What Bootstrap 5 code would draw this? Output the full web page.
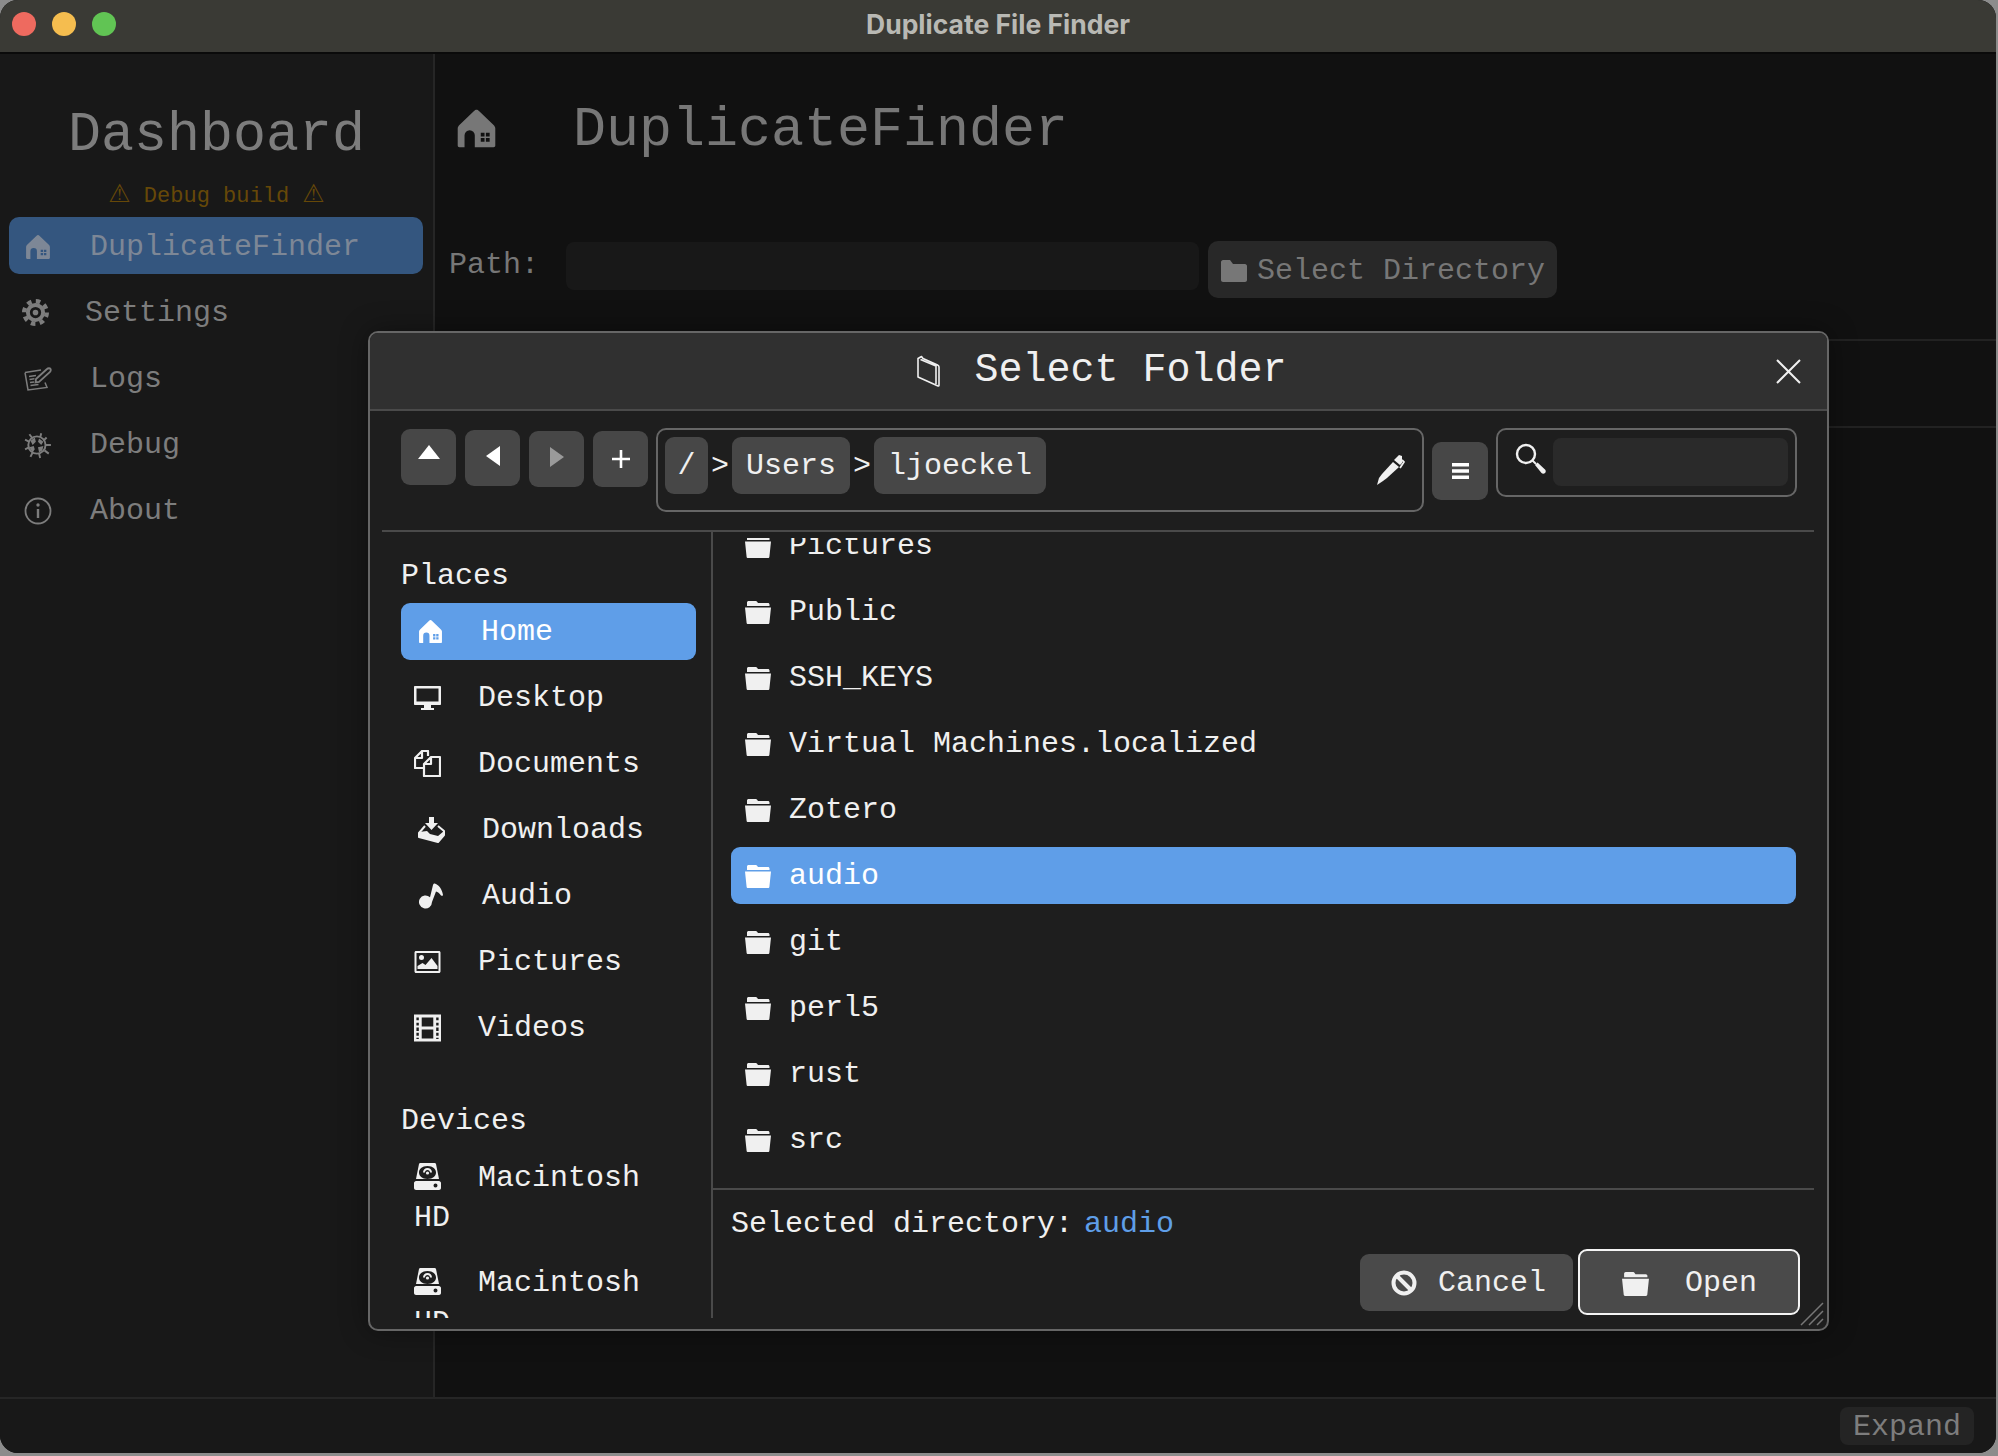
<!DOCTYPE html>
<html lang="en">
<head>
    <meta charset="UTF-8">
    <meta name="viewport" content="width=device-width, initial-scale=1.0">
    <title>Duplicate File Finder</title>
    <link href="https://cdn.jsdelivr.net/npm/bootstrap@5.3.0/dist/css/bootstrap.min.css" rel="stylesheet">
    <style>
        html, body { height: 100%; overflow: hidden; }
        body {
            background: #8c8c8c;
            font-family: "Liberation Mono", "DejaVu Sans Mono", monospace;
            font-size: 30px;
            line-height: 36px;
            color: #f0f0f0;
        }
        svg { flex: none; display: block; }

        .app-window {
            width: 1996px;
            height: 1453px;
            border-radius: 18px;
            overflow: hidden;
            background: #111;
        }

        /* title bar */
        .title-bar {
            height: 54px;
            display: grid;
            grid-template-columns: 1fr auto 1fr;
            align-items: center;
            background: #3a3a35;
            border-bottom: 2px solid #0a0a0a;
            padding: 0 0 4px 12px;
        }
        .light { width: 24px; height: 24px; border-radius: 50%; }
        .title-text {
            font-family: Inter, "Noto Sans", sans-serif;
            font-size: 26.500px;
            font-weight: 700;
            color: #b9b9b4;
            margin-right: 12px;
        }

        /* side panel */
        .side-panel {
            width: 435px;
            background: #181818;
            border-right: 2px solid #262626;
            color: #7d7d7d;
        }
        .side-title { font-size: 55px; line-height: 66px; padding-top: 49px; text-align: center; }
        .debug-note {
            font-size: 22px;
            line-height: 30px;
            margin-top: 13px;
            margin-bottom: 5px;
            color: #664808;
            text-align: center;
        }
        .warn-glyph { font-family: "DejaVu Sans", sans-serif; font-size: 25px; line-height: 0; }
        .side-link {
            height: 57px;
            margin: 0 9px 9px;
            padding: 2px 0 0 15px;
            width: 414px;
            border-radius: 10px;
            color: #7d7d7d;
            gap: 38px;
        }
        .side-link.active { background: #34567f; color: #7d8796; }
        .side-link.tight { padding-left: 13px; gap: 36px; }

        /* main panel */
        .main-panel { padding: 44px 0 0 14px; color: #777; }
        .main-heading { font-size: 55px; line-height: 66px; gap: 76px; padding-left: 7px; }
        .heading-house { margin-top: -6px; }
        .path-row { margin-top: 77px; }
        .path-label { width: 117px; margin-top: 6px; }
        .path-input {
            width: 633px;
            height: 48px;
            margin: 1px 9px 0 0;
            background: #181818;
            border: 0;
            border-radius: 8px;
        }
        .pick-btn {
            --bs-btn-bg: #282828;
            --bs-btn-color: #777;
            width: 349px;
            height: 57px;
            padding: 2px 0 0 13px;
            border: 0;
            border-radius: 10px;
            font: inherit;
            gap: 10px;
        }
        .main-rule { border-top: 2px solid #222; }
        .rule-one { margin-top: 41px; }
        .rule-two { margin-top: 85px; }

        /* bottom bar */
        .bottom-bar {
            height: 56px;
            background: #181818;
            border-top: 2px solid #262626;
            padding: 8px 22px 0 0;
        }
        .expand-btn {
            --bs-btn-bg: #242424;
            --bs-btn-color: #7d7d7d;
            width: 134px;
            height: 38px;
            padding: 1px 0 0;
            border: 0;
            border-radius: 8px;
            font: inherit;
            line-height: 38px;
        }

        /* folder dialog, floats over the page */
        .folder-dialog {
            position: absolute;
            left: 368px;
            top: 331px;
            width: 1461px;
            height: 1000px;
            background: #1e1e1e;
            border: 2px solid #666;
            border-radius: 10px;
            box-shadow: 0 0 28px rgba(0, 0, 0, .4);
            overflow: hidden;
        }
        .dialog-head {
            height: 78px;
            display: grid;
            grid-template-columns: 1fr auto 1fr;
            align-items: center;
            background: #303030;
            border-bottom: 2px solid #4a4a4a;
            padding: 0 26px 0 32px;
        }
        .dialog-title { font-size: 40px; line-height: 48px; gap: 32px; }
        .close-btn { background: none; border: 0; padding: 0; color: #f0f0f0; justify-self: end; }

        .tool-row { height: 119px; padding: 18px 0 0 31px; gap: 9px; }
        .tool-btn {
            --bs-btn-bg: #474747;
            --bs-btn-color: #fff;
            width: 55px;
            height: 56px;
            padding: 0;
            border: 0;
            border-radius: 9px;
        }
        .tool-btn.off { color: #9a9a9a; }
        .nudge-one { margin-top: 1px; }
        .nudge-two { margin-top: 2px; }

        .crumb-box {
            width: 768px;
            height: 84px;
            margin: -1px 0 0 -1px;
            padding: 7px 17px 0 7px;
            border: 2px solid #666;
            border-radius: 10px;
        }
        .crumb {
            height: 57px;
            line-height: 59px;
            padding: 0 14px;
            border-radius: 9px;
            background: #474747;
        }
        .crumb-root { width: 43px; padding: 0; text-align: center; }
        .crumb-sep { width: 24px; line-height: 59px; text-align: center; }
        .menu-btn {
            width: 56px;
            height: 58px;
            margin-top: 13px;
            margin-right: -1px;
        }
        .search-box {
            width: 301px;
            height: 69px;
            margin-top: -1px;
            padding: 8px 7px 0 17px;
            border: 2px solid #666;
            border-radius: 10px;
            gap: 7px;
        }
        .search-input {
            height: 48px;
            background: #2a2a2a;
            border: 0;
            border-radius: 8px;
        }

        .dialog-body { margin: 0 13px 0 12px; height: 788px; border-top: 2px solid #4a4a4a; }
        .places-col {
            width: 331px;
            height: 786px;
            padding: 26px 15px 0 19px;
            border-right: 2px solid #4a4a4a;
            overflow: hidden;
        }
        .group-title { margin-bottom: 9px; }
        .group-devices { margin-top: 47px; margin-bottom: 19px; }
        .place-item {
            height: 57px;
            margin-bottom: 9px;
            padding-left: 13px;
            gap: 37px;
            border-radius: 9px;
        }
        .place-item.wide { padding-left: 17px; gap: 37px; }
        .place-item.home-item { gap: 38px; }
        .place-item.active { background: #5f9ee8; color: #fff; }
        .device-item { padding: 0 13px; margin-bottom: 25px; line-height: 40px; }
        .device-item svg { display: inline-block; vertical-align: -4px; margin-right: 37px; }

        .files-col { min-width: 0; }
        .file-scroll { height: 650px; margin-top: 6px; padding: 0 18px; overflow: hidden; }
        .file-rows { margin-top: -21px; }
        .file-row {
            height: 57px;
            margin-bottom: 9px;
            padding-left: 13px;
            gap: 17px;
            border-radius: 9px;
        }
        .file-row.active { background: #5f9ee8; color: #fff; }
        .dialog-foot { border-top: 2px solid #4a4a4a; padding: 14px 14px 0 18px; }
        .picked-line { line-height: 40px; }
        .picked-name { color: #5f9ee8; margin-left: -7px; }
        .foot-btns { margin-top: 5px; gap: 5px; }
        .foot-btn {
            --bs-btn-bg: #4a4a4a;
            --bs-btn-color: #f0f0f0;
            height: 57px;
            width: 213px;
            padding: 2px 0 0 31px;
            border: 0;
            border-radius: 9px;
            font: inherit;
            gap: 21px;
        }
        .foot-btn.primary {
            width: 222px;
            height: 66px;
            padding-left: 41px;
            gap: 35px;
            border: 2px solid #f4f4f4;
        }
        .resize-grip { position: absolute; right: 3px; bottom: 3px; color: #777; }
    </style>
</head>

<body>
    <svg width="0" height="0" class="position-absolute">
        <symbol id="i-house" viewBox="0 0 24 24">
            <path fill="currentColor" fill-rule="evenodd" d="M12 1c.5 0 1 .3 1.300.6L22 10c.6.6 1 1.300 1 2v10c0 .6-.4 1-1 1H2c-.6 0-1-.4-1-1V12c0-.7.4-1.400 1-2l8.700-8.400C11 1.300 11.500 1 12 1ZM5 23h6v-7a3 3 0 0 0-6 0ZM14.500 14.500v2.200h2.200v-2.200ZM17.500 14.500v2.200h2.200v-2.200ZM14.500 17.500v2.200h2.200v-2.200ZM17.500 17.500v2.200h2.200v-2.200Z"/>
        </symbol>
        <symbol id="i-gear" viewBox="0 0 24 24">
            <circle cx="12" cy="12" r="10" fill="none" stroke="currentColor" stroke-width="4" stroke-dasharray="4 3.850"/>
            <path fill="currentColor" fill-rule="evenodd" d="M12 3.500a8.500 8.500 0 1 0 0 17 8.500 8.500 0 0 0 0-17ZM12 7a5 5 0 1 1 0 10 5 5 0 0 1 0-10ZM12 9.500a2.500 2.500 0 1 0 0 5 2.500 2.500 0 0 0 0-5Z"/>
        </symbol>
        <symbol id="i-log" viewBox="0 0 28 26">
            <path fill="none" stroke="currentColor" stroke-width="1.500" d="M1 6.500 17 4M1 6.500 4 24l19-2.500-2-5M5 10.500l7-1M5.500 13.500l5-.7M6 16.500l4-.6M6.500 19.500l8-1.100"/>
            <path fill="none" stroke="currentColor" stroke-width="1.800" d="M11.500 16.500 12 13 23 3c1-1 3-1 3.500 0s.3 2-.5 3L15 16Z"/>
        </symbol>
        <symbol id="i-bug" viewBox="0 0 26 26">
            <g fill="none" stroke="currentColor" stroke-width="1.800">
                <circle cx="12" cy="13" r="8"/>
                <path d="M5 3 8 7M16 2l-1 4M21 6l-3 3M25 13h-5M23 21l-4-3M15 25l-1-4M6 24l2-4M1 17l4-2M1 8l4 2"/>
            </g>
            <path fill="currentColor" d="M6 9l4-3 1 4-3 3ZM14 7l4 3-2 3-3-3ZM5 15l4-1 1 3-2 3ZM13 15l5-1-1 4-3 2Z"/>
        </symbol>
        <symbol id="i-info" viewBox="0 0 28 28">
            <circle cx="14" cy="14" r="12.500" fill="none" stroke="currentColor" stroke-width="1.800"/>
            <path fill="none" stroke="currentColor" stroke-width="2.400" d="M14 12v9"/>
            <circle cx="14" cy="8" r="1.700" fill="currentColor"/>
        </symbol>
        <symbol id="i-folder" viewBox="0 0 28 24">
            <path fill="currentColor" d="M1 7.500h26l-1.600 15.200c0 .7-.6 1.300-1.300 1.300H3.900c-.7 0-1.300-.6-1.300-1.300ZM3 6V2.500C3 1.700 3.700 1 4.500 1h7.300c.6 0 1 .3 1.300.8l.9 1.200H24c.8 0 1.500.7 1.500 1.500V6Z"/>
        </symbol>
        <symbol id="i-folder-flat" viewBox="0 0 26 22">
            <path fill="currentColor" d="M0 2c0-1 1-2 2-2h7l3 4h12c1 0 2 1 2 2v14c0 1-1 2-2 2H2c-1 0-2-1-2-2Z"/>
        </symbol>
        <symbol id="i-folder-tilt" viewBox="0 0 26 32">
            <path fill="none" stroke="currentColor" stroke-width="1.600" stroke-linejoin="round" d="M2 7v15l20 9c.6.2 1 0 1-1V12c0-1-.5-1.500-1.500-2L7 3.500 5.500 1.500 2 3.500ZM4.500 4.500 20 11v18"/>
        </symbol>
        <symbol id="i-pen" viewBox="0 0 28 30">
            <path fill="currentColor" d="M0 30l2-7 3-4 11-12 6 5-12 11-4 3Z"/>
            <path fill="currentColor" d="M17 5l5-5 3 1v7l-2 2Z"/>
            <path fill="none" stroke="currentColor" stroke-width="1.800" d="M25 5l2 2-4 6"/>
        </symbol>
        <symbol id="i-search" viewBox="0 0 31 31">
            <circle cx="11" cy="11" r="9" fill="none" stroke="currentColor" stroke-width="2.400"/>
            <path fill="none" stroke="currentColor" stroke-width="2" d="M17 17l4 4"/>
            <path fill="currentColor" d="M20 22l2.500-2.500 7.500 7c1 1 1 2.500 0 3.500s-2.500 1-3.500 0Z"/>
        </symbol>
        <symbol id="i-cancel" viewBox="0 0 26 26">
            <circle cx="13" cy="13" r="10.500" fill="none" stroke="currentColor" stroke-width="4"/>
            <path fill="none" stroke="currentColor" stroke-width="4" d="M6 6l14 14"/>
        </symbol>
        <symbol id="i-desktop" viewBox="0 0 27 24">
            <path fill="currentColor" fill-rule="evenodd" d="M1 0h25c.6 0 1 .4 1 1v17c0 .6-.4 1-1 1H1c-.6 0-1-.4-1-1V1c0-.6.4-1 1-1ZM2.500 2.500v13h22v-13ZM10 19h7v3h3v2H7v-2h3Z"/>
        </symbol>
        <symbol id="i-docs" viewBox="0 0 27 27">
            <path fill="none" stroke="currentColor" stroke-width="2.200" stroke-linejoin="round" d="M14 6V1H8L1 8v10h9M8 1v7H1"/>
            <path fill="none" stroke="currentColor" stroke-width="2.200" stroke-linejoin="round" d="M17 7h9v19H10V14ZM17 7v7h-7"/>
        </symbol>
        <symbol id="i-inbox" viewBox="0 0 27 26">
            <path fill="currentColor" d="M11 0h5v6h4l-6.500 7L7 6h4Z"/>
            <path fill="none" stroke="currentColor" stroke-width="2" stroke-linejoin="round" d="M7 9 1 16v4l19 5 6-7v-4l-6-5"/>
            <path fill="currentColor" d="M1 15l8-1 3 3 8 2 6-5v4l-6 7-19-5Z"/>
        </symbol>
        <symbol id="i-note" viewBox="0 0 25 26">
            <path fill="currentColor" d="M13 19a6.500 6.500 0 1 1-2-4.700L14 2c.3-1.500 1.500-2 3-1 3 1.500 6 5 7 11-.3 1-1 1-2 .5-1.500-2.500-3.300-3.500-5-4Z"/>
        </symbol>
        <symbol id="i-picture" viewBox="0 0 26 22">
            <path fill="currentColor" fill-rule="evenodd" d="M1.500 0h23c.8 0 1.500.7 1.500 1.500v19c0 .8-.7 1.500-1.500 1.500h-23C.7 22 0 21.300 0 20.500v-19C0 .7.700 0 1.500 0ZM2 2v18h22V2ZM7 4a2.500 2.500 0 1 1 0 5 2.500 2.500 0 0 1 0-5ZM3 18v-3l5-3 3 2 6-7 6 8v3Z"/>
        </symbol>
        <symbol id="i-film" viewBox="0 0 28 28">
            <path fill="currentColor" fill-rule="evenodd" d="M0 0h28v28H0ZM2.500 3v3h2.500V3ZM2.500 8.500v3h2.500v-3ZM2.500 13.500v3.500h2.500v-3.500ZM2.500 19v3h2.500v-3ZM2.500 24v1.500h2.500V24ZM23 3v3h2.500V3ZM23 8.500v3h2.500v-3ZM23 13.500v3.500h2.500v-3.500ZM23 19v3h2.500v-3ZM23 24v1.500h2.500V24ZM8 3v9.500h12V3ZM8 15.500V25h12v-9.500Z"/>
        </symbol>
        <symbol id="i-disk" viewBox="0 0 27 27">
            <path fill="currentColor" fill-rule="evenodd" d="M5 1c.2-.6.700-1 1.300-1h14.400c.6 0 1.100.4 1.300 1l3 15H2ZM13.500 3C8 3 5 6 5 9.500S8 16 13.500 16 22 13 22 9.500 19 3 13.500 3ZM2 18h23c1 0 2 1 2 2v5c0 1-1 2-2 2H2c-1 0-2-1-2-2v-5c0-1 1-2 2-2ZM21.500 20.500a2 2 0 1 0 0 4 2 2 0 0 0 0-4Z"/>
            <path fill="currentColor" d="M9 9.500a4.500 4.500 0 0 1 9 0h-2c0-1.500-1-2.500-2.500-2.500S11 8 11 9.500Z"/>
            <circle cx="13.500" cy="10" r="1.600" fill="currentColor"/>
        </symbol>
    </svg>

    <div class="app-window d-flex flex-column position-relative">
        <div class="title-bar">
            <div class="d-flex gap-3">
                <span class="light" style="background:#ee6a5f"></span>
                <span class="light" style="background:#f5bd4f"></span>
                <span class="light" style="background:#61c454"></span>
            </div>
            <div class="title-text">Duplicate File Finder</div>
            <div></div>
        </div>

        <div class="d-flex flex-fill" style="min-height:0">
            <aside class="side-panel">
                <div class="side-title">Dashboard</div>
                <div class="debug-note"><span class="warn-glyph">⚠</span> Debug build <span class="warn-glyph">⚠</span></div>
                <nav class="nav flex-column">
                    <a class="nav-link side-link active d-flex align-items-center" href="#"><svg width="28" height="26"><use href="#i-house"/></svg>DuplicateFinder</a>
                    <a class="nav-link side-link tight d-flex align-items-center" href="#"><svg width="27" height="27"><use href="#i-gear"/></svg>Settings</a>
                    <a class="nav-link side-link d-flex align-items-center" href="#"><svg width="28" height="26"><use href="#i-log"/></svg>Logs</a>
                    <a class="nav-link side-link d-flex align-items-center" href="#"><svg width="28" height="28"><use href="#i-bug"/></svg>Debug</a>
                    <a class="nav-link side-link d-flex align-items-center" href="#"><svg width="28" height="28"><use href="#i-info"/></svg>About</a>
                </nav>
            </aside>

            <main class="main-panel flex-fill">
                <div class="main-heading d-flex align-items-center"><svg class="heading-house" width="41" height="41"><use href="#i-house"/></svg>DuplicateFinder</div>
                <div class="path-row d-flex align-items-start">
                    <div class="path-label">Path:</div>
                    <input class="form-control path-input" type="text">
                    <button class="btn pick-btn d-flex align-items-center" type="button"><svg width="26" height="22"><use href="#i-folder-flat"/></svg>Select Directory</button>
                </div>
                <div class="main-rule rule-one"></div>
                <div class="main-rule rule-two"></div>
            </main>
        </div>

        <div class="bottom-bar d-flex justify-content-end">
            <button class="btn expand-btn" type="button">Expand</button>
        </div>

        <div class="folder-dialog d-flex flex-column">
            <div class="dialog-head">
                <div></div>
                <div class="dialog-title d-flex align-items-center"><svg width="26" height="32"><use href="#i-folder-tilt"/></svg>Select Folder</div>
                <button class="close-btn" type="button" aria-label="Close">
                    <svg width="25" height="25" viewBox="0 0 25 25"><path fill="none" stroke="currentColor" stroke-width="2" d="M1 1l23 23M24 1 1 24"/></svg>
                </button>
            </div>

            <div class="tool-row d-flex align-items-start">
                <button class="btn tool-btn d-flex align-items-center justify-content-center" type="button"><svg width="22" height="14" viewBox="0 0 22 14" style="margin-bottom:10px"><path fill="currentColor" d="M11 0 22 14H0Z"/></svg></button>
                <button class="btn tool-btn nudge-one d-flex align-items-center justify-content-center" type="button"><svg width="14" height="20" viewBox="0 0 14 20" style="margin-bottom:4px"><path fill="currentColor" d="M14 0V20L0 10Z"/></svg></button>
                <button class="btn tool-btn off nudge-two d-flex align-items-center justify-content-center" type="button"><svg width="14" height="20" viewBox="0 0 14 20" style="margin-bottom:4px"><path fill="currentColor" d="M0 0V20L14 10Z"/></svg></button>
                <button class="btn tool-btn nudge-two d-flex align-items-center justify-content-center" type="button"><svg width="18" height="18" viewBox="0 0 18 18"><path fill="none" stroke="currentColor" stroke-width="2.600" d="M9 0v18M0 9h18"/></svg></button>
                <div class="crumb-box d-flex align-items-start">
                    <span class="crumb crumb-root">/</span>
                    <span class="crumb-sep">&gt;</span>
                    <span class="crumb">Users</span>
                    <span class="crumb-sep">&gt;</span>
                    <span class="crumb">ljoeckel</span>
                    <svg class="ms-auto align-self-center" width="28" height="30" style="margin-top:-7px"><use href="#i-pen"/></svg>
                </div>
                <button class="btn tool-btn menu-btn d-flex align-items-center justify-content-center" type="button" style="margin-left:-1px"><svg width="17" height="16" viewBox="0 0 17 16"><path fill="currentColor" d="M0 0h17v3.500H0ZM0 6.200h17v3.500H0ZM0 12.500h17V16H0Z"/></svg></button>
                <div class="search-box d-flex align-items-start">
                    <svg width="31" height="31" style="margin-top:5px"><use href="#i-search"/></svg>
                    <input class="form-control search-input" type="text">
                </div>
            </div>

            <div class="dialog-body d-flex">
                <div class="places-col flex-shrink-0">
                    <div class="group-title">Places</div>
                    <div class="place-item wide home-item active d-flex align-items-center"><svg width="25" height="25"><use href="#i-house"/></svg>Home</div>
                    <div class="place-item d-flex align-items-center"><svg width="27" height="24"><use href="#i-desktop"/></svg>Desktop</div>
                    <div class="place-item d-flex align-items-center"><svg width="27" height="27"><use href="#i-docs"/></svg>Documents</div>
                    <div class="place-item wide d-flex align-items-center"><svg width="27" height="26"><use href="#i-inbox"/></svg>Downloads</div>
                    <div class="place-item wide d-flex align-items-center"><svg width="27" height="26"><use href="#i-note"/></svg>Audio</div>
                    <div class="place-item d-flex align-items-center"><svg width="27" height="22"><use href="#i-picture"/></svg>Pictures</div>
                    <div class="place-item d-flex align-items-center"><svg width="27" height="28"><use href="#i-film"/></svg>Videos</div>
                    <div class="group-title group-devices">Devices</div>
                    <div class="device-item"><svg width="27" height="27"><use href="#i-disk"/></svg>Macintosh HD</div>
                    <div class="device-item"><svg width="27" height="27"><use href="#i-disk"/></svg>Macintosh HD</div>
                </div>

                <div class="files-col flex-fill d-flex flex-column">
                    <div class="file-scroll">
                        <div class="file-rows">
                            <div class="file-row d-flex align-items-center"><svg width="28" height="24"><use href="#i-folder"/></svg>Pictures</div>
                            <div class="file-row d-flex align-items-center"><svg width="28" height="24"><use href="#i-folder"/></svg>Public</div>
                            <div class="file-row d-flex align-items-center"><svg width="28" height="24"><use href="#i-folder"/></svg>SSH_KEYS</div>
                            <div class="file-row d-flex align-items-center"><svg width="28" height="24"><use href="#i-folder"/></svg>Virtual Machines.localized</div>
                            <div class="file-row d-flex align-items-center"><svg width="28" height="24"><use href="#i-folder"/></svg>Zotero</div>
                            <div class="file-row active d-flex align-items-center"><svg width="28" height="24"><use href="#i-folder"/></svg>audio</div>
                            <div class="file-row d-flex align-items-center"><svg width="28" height="24"><use href="#i-folder"/></svg>git</div>
                            <div class="file-row d-flex align-items-center"><svg width="28" height="24"><use href="#i-folder"/></svg>perl5</div>
                            <div class="file-row d-flex align-items-center"><svg width="28" height="24"><use href="#i-folder"/></svg>rust</div>
                            <div class="file-row d-flex align-items-center"><svg width="28" height="24"><use href="#i-folder"/></svg>src</div>
                        </div>
                    </div>
                    <div class="dialog-foot">
                        <div class="picked-line">Selected directory: <span class="picked-name">audio</span></div>
                        <div class="foot-btns d-flex justify-content-end align-items-center">
                            <button class="btn foot-btn d-flex align-items-center" type="button"><svg width="26" height="26"><use href="#i-cancel"/></svg>Cancel</button>
                            <button class="btn foot-btn primary d-flex align-items-center" type="button"><svg width="29" height="25"><use href="#i-folder"/></svg>Open</button>
                        </div>
                    </div>
                </div>
            </div>

            <svg class="resize-grip" width="24" height="24" viewBox="0 0 24 24"><path fill="none" stroke="currentColor" stroke-width="1.500" d="M1 23 23 1M9 23 23 9M17 23l6-6"/></svg>
        </div>
    </div>

    <script src="https://cdn.jsdelivr.net/npm/bootstrap@5.3.0/dist/js/bootstrap.bundle.min.js"></script>
</body>
</html>
